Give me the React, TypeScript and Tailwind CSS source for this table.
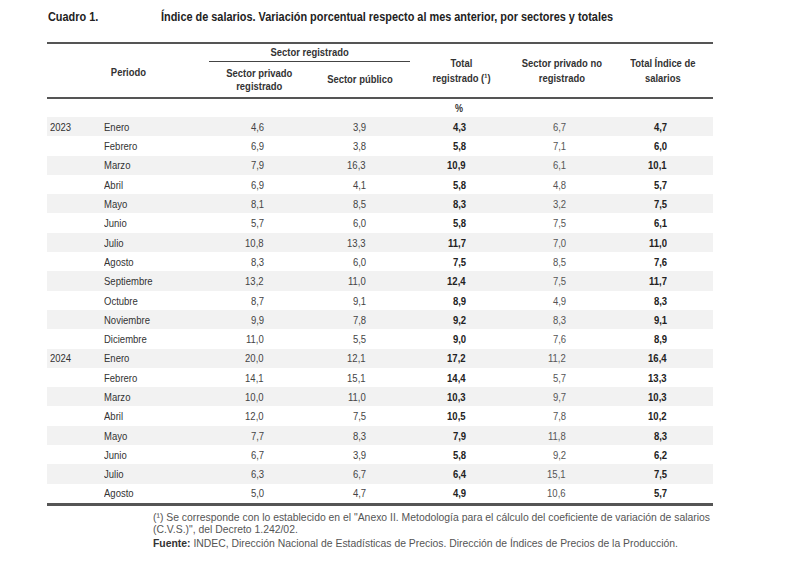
import type { ReactNode } from "react";

const rows: [string, string, string, string, string, string, string][] = [
  ["2023", "Enero", "4,6", "3,9", "4,3", "6,7", "4,7"],
  ["", "Febrero", "6,9", "3,8", "5,8", "7,1", "6,0"],
  ["", "Marzo", "7,9", "16,3", "10,9", "6,1", "10,1"],
  ["", "Abril", "6,9", "4,1", "5,8", "4,8", "5,7"],
  ["", "Mayo", "8,1", "8,5", "8,3", "3,2", "7,5"],
  ["", "Junio", "5,7", "6,0", "5,8", "7,5", "6,1"],
  ["", "Julio", "10,8", "13,3", "11,7", "7,0", "11,0"],
  ["", "Agosto", "8,3", "6,0", "7,5", "8,5", "7,6"],
  ["", "Septiembre", "13,2", "11,0", "12,4", "7,5", "11,7"],
  ["", "Octubre", "8,7", "9,1", "8,9", "4,9", "8,3"],
  ["", "Noviembre", "9,9", "7,8", "9,2", "8,3", "9,1"],
  ["", "Diciembre", "11,0", "5,5", "9,0", "7,6", "8,9"],
  ["2024", "Enero", "20,0", "12,1", "17,2", "11,2", "16,4"],
  ["", "Febrero", "14,1", "15,1", "14,4", "5,7", "13,3"],
  ["", "Marzo", "10,0", "11,0", "10,3", "9,7", "10,3"],
  ["", "Abril", "12,0", "7,5", "10,5", "7,8", "10,2"],
  ["", "Mayo", "7,7", "8,3", "7,9", "11,8", "8,3"],
  ["", "Junio", "6,7", "3,9", "5,8", "9,2", "6,2"],
  ["", "Julio", "6,3", "6,7", "6,4", "15,1", "7,5"],
  ["", "Agosto", "5,0", "4,7", "4,9", "10,6", "5,7"],
];

const cols = "grid grid-cols-[57px_105px_101px_100px_102px_100px_101px]";

// narrow look: Arial metrics squeezed horizontally
const N = ({ children, o = "c" }: { children: ReactNode; o?: "l" | "c" | "r" }) => (
  <span
    className={`inline-block whitespace-nowrap scale-x-[0.82] ${
      o === "l" ? "origin-left" : o === "r" ? "origin-right" : "origin-center"
    }`}
  >
    {children}
  </span>
);

export default function App() {
  return (
    <div className="w-[800px] h-[567px] bg-white pt-[10px] pl-[47px] font-['Liberation_Sans',Arial,sans-serif]">
      <div className="flex h-[14px] items-center text-[13.3px] font-bold leading-[14px] text-[#222]">
        <span className="w-[114px] pl-[1px]">
          <N o="l">Cuadro 1.</N>
        </span>
        <N o="l">Índice de salarios. Variación porcentual respecto al mes anterior, por sectores y totales</N>
      </div>

      <div className="mt-[18px] w-[666px]">
        <div className="h-[2px] bg-[#555]" />
        <div className={`${cols} grid-rows-[18px_35px] text-[11.5px] font-bold leading-[15px] text-[#333] text-center`}>
          <div className="col-span-2 row-span-2 flex items-center justify-center pt-[3px]">
            <N>Periodo</N>
          </div>
          <div className="col-span-2 flex items-center justify-center border-b border-[#444]">
            <N>Sector registrado</N>
          </div>
          <div className="row-span-2 flex items-center justify-center">
            <N>
              Total
              <br />
              registrado (¹)
            </N>
          </div>
          <div className="row-span-2 flex items-center justify-center">
            <N>
              Sector privado no
              <br />
              registrado
            </N>
          </div>
          <div className="row-span-2 flex items-center justify-center">
            <N>
              Total Índice de
              <br />
              salarios
            </N>
          </div>
          <div className="flex items-center justify-center leading-[13px]">
            <N>
              Sector privado
              <br />
              registrado
            </N>
          </div>
          <div className="flex items-center justify-center">
            <N>Sector público</N>
          </div>
        </div>
        <div className="h-[2px] bg-[#555]" />
        <div className={`${cols} h-[18px] items-center text-[11px] font-bold text-[#333]`}>
          <div className="col-start-5 text-center pr-[4px]">
            <N>%</N>
          </div>
        </div>

        {rows.map((r, i) => (
          <div
            key={i}
            className={`${cols} h-[19.3px] items-center text-[11.6px] leading-none ${i % 2 === 0 ? "bg-[#f2f2f2]" : ""}`}
          >
            <div className="pl-[3px] text-[#333]">
              <N o="l">{r[0]}</N>
            </div>
            <div className="text-[#333]">
              <N o="l">{r[1]}</N>
            </div>
            <div className="text-right pr-[46px] text-[#444]">
              <N o="r">{r[2]}</N>
            </div>
            <div className="text-right pr-[44px] text-[#444]">
              <N o="r">{r[3]}</N>
            </div>
            <div className="text-right pr-[46px] font-bold text-[#222]">
              <N o="r">{r[4]}</N>
            </div>
            <div className="text-right pr-[46px] text-[#555]">
              <N o="r">{r[5]}</N>
            </div>
            <div className="text-right pr-[46px] font-bold text-[#222]">
              <N o="r">{r[6]}</N>
            </div>
          </div>
        ))}
        <div className="h-[3px] bg-[#555]" />
      </div>

      <div className="mt-[6px] ml-[106px] w-[570px] text-[10.4px] leading-[12px] text-[#555]">
        <p className="whitespace-nowrap">
          (¹) Se corresponde con lo establecido en el "Anexo II. Metodología para el cálculo del coeficiente de variación de salarios
          <br />
          (C.V.S.)", del Decreto 1.242/02.
        </p>
        <p className="mt-[2px] whitespace-nowrap">
          <span className="font-bold text-[#333]">Fuente:</span> INDEC, Dirección Nacional de Estadísticas de Precios. Dirección de Índices de Precios de la Producción.
        </p>
      </div>
    </div>
  );
}
